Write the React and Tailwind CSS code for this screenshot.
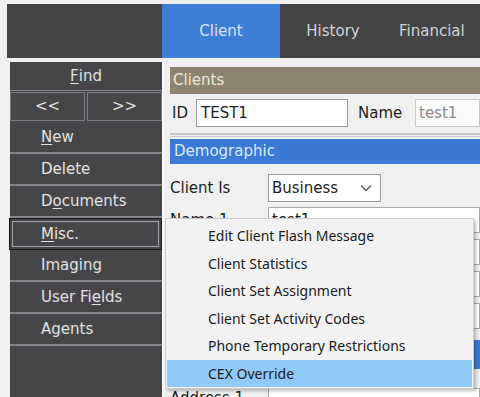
import React from "react";

const ui = { fontFamily: '"DejaVu Sans", Verdana, sans-serif' };
const menuFont = { fontFamily: '"Noto Sans", "Segoe UI", sans-serif' };

function U({ children }) {
  return <span className="underline underline-offset-2">{children}</span>;
}

function SideButton({ children, center }) {
  return (
    <div
      className={`h-[32px] flex items-center border-b-2 border-[#85858a] text-[15px] text-[#e2e2e2] ${
        center ? "justify-center" : "pl-[31px]"
      }`}
    >
      {children}
    </div>
  );
}

const menuItems = [
  "Edit Client Flash Message",
  "Client Statistics",
  "Client Set Assignment",
  "Client Set Activity Codes",
  "Phone Temporary Restrictions",
  "CEX Override",
];

export default function App() {
  return (
    <div className="relative w-[480px] h-[397px] overflow-hidden bg-[#f0f0f0]" style={ui}>
      {/* top bar with tabs */}
      <div className="flex h-[54px] mt-[4px] ml-[7px] bg-[#444446]">
        <div className="w-[155px]" />
        <div className="w-[118px] flex items-center justify-center bg-[#3c7dd6] text-[15px] text-[#d6e6fb]">
          Client
        </div>
        <div className="w-[106px] flex items-center justify-center text-[15px] text-[#d2d2d2]">
          History
        </div>
        <div className="flex-1 flex items-center pl-[13px] text-[15px] text-[#d2d2d2]">
          Financial
        </div>
      </div>

      <div className="flex mt-[4px]">
        {/* left command column */}
        <div className="ml-[10px] w-[152px] h-[335px] bg-[#464648] flex flex-col">
          <div className="h-[29px] flex items-center justify-center border-b border-[#85858a] text-[15px] text-[#e2e2e2]">
            <U>F</U>ind
          </div>
          <div className="flex gap-[2px] h-[31px] py-[1px]">
            <div className="flex-1 flex items-center justify-center border border-[#7c7c80] text-[15px] text-[#e2e2e2]">
              &lt;&lt;
            </div>
            <div className="flex-1 flex items-center justify-center border border-[#7c7c80] text-[15px] text-[#e2e2e2]">
              &gt;&gt;
            </div>
          </div>
          <SideButton>
            <U>N</U>ew
          </SideButton>
          <SideButton>Delete</SideButton>
          <SideButton>
            D<U>o</U>cuments
          </SideButton>
          <div className="h-[32px] -ml-[1px] border border-[#151515] p-[2px]">
            <div className="h-full flex items-center pl-[28px] border border-[#a4a4a8] text-[15px] text-[#e2e2e2]">
              <U>M</U>isc.
            </div>
          </div>
          <SideButton>Imaging</SideButton>
          <SideButton>
            User Fi<U>e</U>lds
          </SideButton>
          <SideButton>Agents</SideButton>
        </div>

        {/* main form */}
        <div className="flex-1 border-l-2 border-[#fafafa] pl-[6px] pt-[5px] text-[15px] text-[#1e1e1e]">
          <div className="h-[27px] flex items-center pl-[3px] bg-[#8e8271] text-[#efe7d8]">Clients</div>
          <div className="flex items-center h-[28px] mt-[5px]">
            <span className="w-[26px] pl-[2px]">ID</span>
            <div className="w-[152px] h-[28px] flex items-center pl-[4px] bg-white border border-[#9a9a9a]">TEST1</div>
            <span className="ml-[10px] w-[57px]">Name</span>
            <div className="flex-1 h-[28px] flex items-center pl-[3px] bg-[#fbfbfb] border border-[#c8c8c8] text-[#8a8a8a]">
              test1
            </div>
          </div>
          <div className="mt-[6px] h-[4px] border-t-2 border-b border-[#c6c6c6]" />
          <div className="mt-[2px] h-[25px] flex items-center pl-[4px] bg-[#3a79d4] text-[#dce9fb]">Demographic</div>

          <div className="flex items-center h-[28px] mt-[10px]">
            <span className="w-[98px]">Client Is</span>
            <div className="w-[113px] h-[28px] flex items-center justify-between pl-[3px] pr-[8px] bg-white border border-[#9a9a9a]">
              Business
              <svg width="12" height="8" viewBox="0 0 12 8">
                <path d="M1 1.5 L6 6.5 L11 1.5" fill="none" stroke="#555" strokeWidth="1.3" />
              </svg>
            </div>
          </div>
          <div className="flex items-center h-[26px] mt-[5px]">
            <span className="w-[98px]">Name 1</span>
            <div className="flex-1 h-[26px] flex items-center pl-[3px] bg-white border border-[#a8a8a8]">test1</div>
          </div>
          <div className="flex h-[26px] mt-[6px] pl-[98px]">
            <div className="flex-1 bg-white border border-[#a8a8a8]" />
          </div>
          <div className="flex h-[26px] mt-[6px] pl-[98px]">
            <div className="flex-1 bg-white border border-[#a8a8a8]" />
          </div>
          <div className="flex h-[26px] mt-[6px] pl-[98px]">
            <div className="flex-1 bg-white border border-[#a8a8a8]" />
          </div>
          <div className="mt-[11px] h-[29px] bg-[#3a79d4]" />
          <div className="flex items-start h-[26px] mt-[19px]">
            <span className="w-[98px] leading-[16px] pt-[2px]">Address 1</span>
            <div className="flex-1 h-[26px] bg-white border border-[#a8a8a8]" />
          </div>
        </div>
      </div>

      {/* context menu */}
      <div
        className="absolute left-[165px] top-[218px] w-[309px] h-[171px] bg-[#f2f2f2] border border-[#cdcdcd] shadow-[2px_2px_3px_rgba(0,0,0,0.25)] pt-[3px] px-[1px]"
        style={menuFont}
      >
        {menuItems.map((item, i) => (
          <div
            key={item}
            className={`h-[27.5px] flex items-center pl-[41px] text-[14px] text-[#1a1a1a] ${
              i === menuItems.length - 1 ? "bg-[#91c9f7]" : ""
            }`}
          >
            {item}
          </div>
        ))}
      </div>
    </div>
  );
}
